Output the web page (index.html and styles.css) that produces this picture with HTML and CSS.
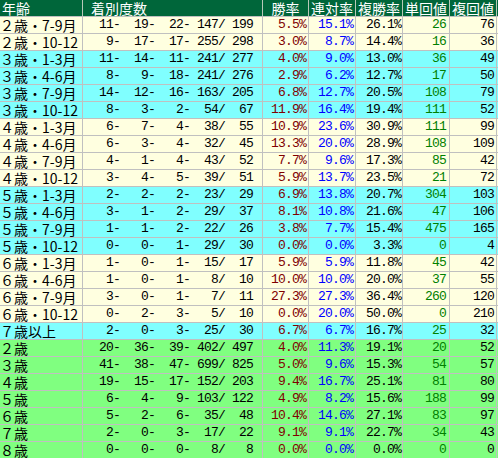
FILE: index.html
```html
<!DOCTYPE html>
<html lang="ja">
<head>
<meta charset="utf-8">
<title>年齢別成績</title>
<link rel="stylesheet" href="styles.css">
</head>
<body>
<table class="stats">
  <thead>
    <tr class="head">
      <th class="c1 left">年齢</th>
      <th class="c2 left2">着別度数</th>
      <th class="c3">勝率</th>
      <th class="c4">連対率</th>
      <th class="c5">複勝率</th>
      <th class="c6">単回値</th>
      <th class="c7">複回値</th>
      <th class="c8"></th>
    </tr>
  </thead>
  <tbody>
    <tr class="cream"><td class="lbl">２歳・7-9月</td><td class="num cnt">  11-  19-  22- 147/ 199</td><td class="num win">5.5%</td><td class="num ren">15.1%</td><td class="num fuku">26.1%</td><td class="num tan">26</td><td class="num fk">76</td><td class="c8"></td></tr>
    <tr class="cream"><td class="lbl">２歳・10-12</td><td class="num cnt">   9-  17-  17- 255/ 298</td><td class="num win">3.0%</td><td class="num ren">8.7%</td><td class="num fuku">14.4%</td><td class="num tan">16</td><td class="num fk">36</td><td class="c8"></td></tr>
    <tr class="cyan"><td class="lbl">３歳・1-3月</td><td class="num cnt">  11-  14-  11- 241/ 277</td><td class="num win">4.0%</td><td class="num ren">9.0%</td><td class="num fuku">13.0%</td><td class="num tan">36</td><td class="num fk">49</td><td class="c8"></td></tr>
    <tr class="cyan"><td class="lbl">３歳・4-6月</td><td class="num cnt">   8-   9-  18- 241/ 276</td><td class="num win">2.9%</td><td class="num ren">6.2%</td><td class="num fuku">12.7%</td><td class="num tan">17</td><td class="num fk">50</td><td class="c8"></td></tr>
    <tr class="cyan"><td class="lbl">３歳・7-9月</td><td class="num cnt">  14-  12-  16- 163/ 205</td><td class="num win">6.8%</td><td class="num ren">12.7%</td><td class="num fuku">20.5%</td><td class="num tan">108</td><td class="num fk">79</td><td class="c8"></td></tr>
    <tr class="cyan"><td class="lbl">３歳・10-12</td><td class="num cnt">   8-   3-   2-  54/  67</td><td class="num win">11.9%</td><td class="num ren">16.4%</td><td class="num fuku">19.4%</td><td class="num tan">111</td><td class="num fk">52</td><td class="c8"></td></tr>
    <tr class="cream"><td class="lbl">４歳・1-3月</td><td class="num cnt">   6-   7-   4-  38/  55</td><td class="num win">10.9%</td><td class="num ren">23.6%</td><td class="num fuku">30.9%</td><td class="num tan">111</td><td class="num fk">99</td><td class="c8"></td></tr>
    <tr class="cream"><td class="lbl">４歳・4-6月</td><td class="num cnt">   6-   3-   4-  32/  45</td><td class="num win">13.3%</td><td class="num ren">20.0%</td><td class="num fuku">28.9%</td><td class="num tan">108</td><td class="num fk">109</td><td class="c8"></td></tr>
    <tr class="cream"><td class="lbl">４歳・7-9月</td><td class="num cnt">   4-   1-   4-  43/  52</td><td class="num win">7.7%</td><td class="num ren">9.6%</td><td class="num fuku">17.3%</td><td class="num tan">85</td><td class="num fk">42</td><td class="c8"></td></tr>
    <tr class="cream"><td class="lbl">４歳・10-12</td><td class="num cnt">   3-   4-   5-  39/  51</td><td class="num win">5.9%</td><td class="num ren">13.7%</td><td class="num fuku">23.5%</td><td class="num tan">21</td><td class="num fk">72</td><td class="c8"></td></tr>
    <tr class="cyan"><td class="lbl">５歳・1-3月</td><td class="num cnt">   2-   2-   2-  23/  29</td><td class="num win">6.9%</td><td class="num ren">13.8%</td><td class="num fuku">20.7%</td><td class="num tan">304</td><td class="num fk">103</td><td class="c8"></td></tr>
    <tr class="cyan"><td class="lbl">５歳・4-6月</td><td class="num cnt">   3-   1-   2-  29/  37</td><td class="num win">8.1%</td><td class="num ren">10.8%</td><td class="num fuku">21.6%</td><td class="num tan">47</td><td class="num fk">106</td><td class="c8"></td></tr>
    <tr class="cyan"><td class="lbl">５歳・7-9月</td><td class="num cnt">   1-   1-   2-  22/  26</td><td class="num win">3.8%</td><td class="num ren">7.7%</td><td class="num fuku">15.4%</td><td class="num tan">475</td><td class="num fk">165</td><td class="c8"></td></tr>
    <tr class="cyan"><td class="lbl">５歳・10-12</td><td class="num cnt">   0-   0-   1-  29/  30</td><td class="num win">0.0%</td><td class="num ren">0.0%</td><td class="num fuku">3.3%</td><td class="num tan">0</td><td class="num fk">4</td><td class="c8"></td></tr>
    <tr class="cream"><td class="lbl">６歳・1-3月</td><td class="num cnt">   1-   0-   1-  15/  17</td><td class="num win">5.9%</td><td class="num ren">5.9%</td><td class="num fuku">11.8%</td><td class="num tan">45</td><td class="num fk">42</td><td class="c8"></td></tr>
    <tr class="cream"><td class="lbl">６歳・4-6月</td><td class="num cnt">   1-   0-   1-   8/  10</td><td class="num win">10.0%</td><td class="num ren">10.0%</td><td class="num fuku">20.0%</td><td class="num tan">37</td><td class="num fk">55</td><td class="c8"></td></tr>
    <tr class="cream"><td class="lbl">６歳・7-9月</td><td class="num cnt">   3-   0-   1-   7/  11</td><td class="num win">27.3%</td><td class="num ren">27.3%</td><td class="num fuku">36.4%</td><td class="num tan">260</td><td class="num fk">120</td><td class="c8"></td></tr>
    <tr class="cream"><td class="lbl">６歳・10-12</td><td class="num cnt">   0-   2-   3-   5/  10</td><td class="num win">0.0%</td><td class="num ren">20.0%</td><td class="num fuku">50.0%</td><td class="num tan">0</td><td class="num fk">210</td><td class="c8"></td></tr>
    <tr class="cyan"><td class="lbl">７歳以上</td><td class="num cnt">   2-   0-   3-  25/  30</td><td class="num win">6.7%</td><td class="num ren">6.7%</td><td class="num fuku">16.7%</td><td class="num tan">25</td><td class="num fk">32</td><td class="c8"></td></tr>
    <tr class="green"><td class="lbl">２歳</td><td class="num cnt">  20-  36-  39- 402/ 497</td><td class="num win">4.0%</td><td class="num ren">11.3%</td><td class="num fuku">19.1%</td><td class="num tan">20</td><td class="num fk">52</td><td class="c8"></td></tr>
    <tr class="green"><td class="lbl">３歳</td><td class="num cnt">  41-  38-  47- 699/ 825</td><td class="num win">5.0%</td><td class="num ren">9.6%</td><td class="num fuku">15.3%</td><td class="num tan">54</td><td class="num fk">57</td><td class="c8"></td></tr>
    <tr class="green"><td class="lbl">４歳</td><td class="num cnt">  19-  15-  17- 152/ 203</td><td class="num win">9.4%</td><td class="num ren">16.7%</td><td class="num fuku">25.1%</td><td class="num tan">81</td><td class="num fk">80</td><td class="c8"></td></tr>
    <tr class="green"><td class="lbl">５歳</td><td class="num cnt">   6-   4-   9- 103/ 122</td><td class="num win">4.9%</td><td class="num ren">8.2%</td><td class="num fuku">15.6%</td><td class="num tan">188</td><td class="num fk">99</td><td class="c8"></td></tr>
    <tr class="green"><td class="lbl">６歳</td><td class="num cnt">   5-   2-   6-  35/  48</td><td class="num win">10.4%</td><td class="num ren">14.6%</td><td class="num fuku">27.1%</td><td class="num tan">83</td><td class="num fk">97</td><td class="c8"></td></tr>
    <tr class="green"><td class="lbl">７歳</td><td class="num cnt">   2-   0-   3-  17/  22</td><td class="num win">9.1%</td><td class="num ren">9.1%</td><td class="num fuku">22.7%</td><td class="num tan">34</td><td class="num fk">43</td><td class="c8"></td></tr>
    <tr class="green"><td class="lbl">８歳</td><td class="num cnt">   0-   0-   0-   8/   8</td><td class="num win">0.0%</td><td class="num ren">0.0%</td><td class="num fuku">0.0%</td><td class="num tan">0</td><td class="num fk">0</td><td class="c8"></td></tr>
  </tbody>
</table>
</body>
</html>
```

FILE: styles.css
```css
html, body {
  margin: 0;
  padding: 0;
  background: #ffffff;
}

.stats {
  width: 498px;
  table-layout: fixed;
  border-collapse: separate;
  border-spacing: 0;
  font-family: "Noto Sans CJK JP", "Noto Sans", sans-serif;
  font-size: 14px;
  color: #000;
}

.stats th,
.stats td {
  box-sizing: border-box;
  padding: 0;
  height: 17px;
  line-height: 16px;
  border-right: 1px solid #c0c0c0;
  border-bottom: 1px solid #c0c0c0;
  white-space: pre;
  vertical-align: middle;
}

.c1 { width: 83px; }
.c2 { width: 180px; }
.c3 { width: 46px; }
.c4 { width: 47px; }
.c5 { width: 47px; }
.c6 { width: 47px; }
.c7 { width: 47px; }
.stats .c8 { width: 1px; border-right: none; }

.head th {
  background: #00663a;
  color: #ffffff;
  font-weight: normal;
  text-align: center;
  border-right-color: #b8c8b8;
}
.head th.left { text-align: left; padding-left: 2px; }
.head th.left2 { text-align: left; padding-left: 8px; }

.cream td { background: #ffffe0; }
.cyan td { background: #80ffff; }
.green td { background: #80ff80; }

.lbl {
  padding-left: 2px;
  text-align: left;
}

.num {
  font-family: "Liberation Mono", "DejaVu Sans Mono", monospace;
  font-size: 13px;
  letter-spacing: -0.8px;
  text-align: right;
}

.stats .cnt { padding-right: 9px; color: #000; }
.stats .win { padding-right: 2px; color: #800000; }
.stats .ren { padding-right: 2px; color: #0000ff; }
.stats .fuku { padding-right: 1px; color: #000; }
.stats .tan { padding-right: 3px; color: #008000; }
.stats .fk { padding-right: 2px; color: #000; }
```
